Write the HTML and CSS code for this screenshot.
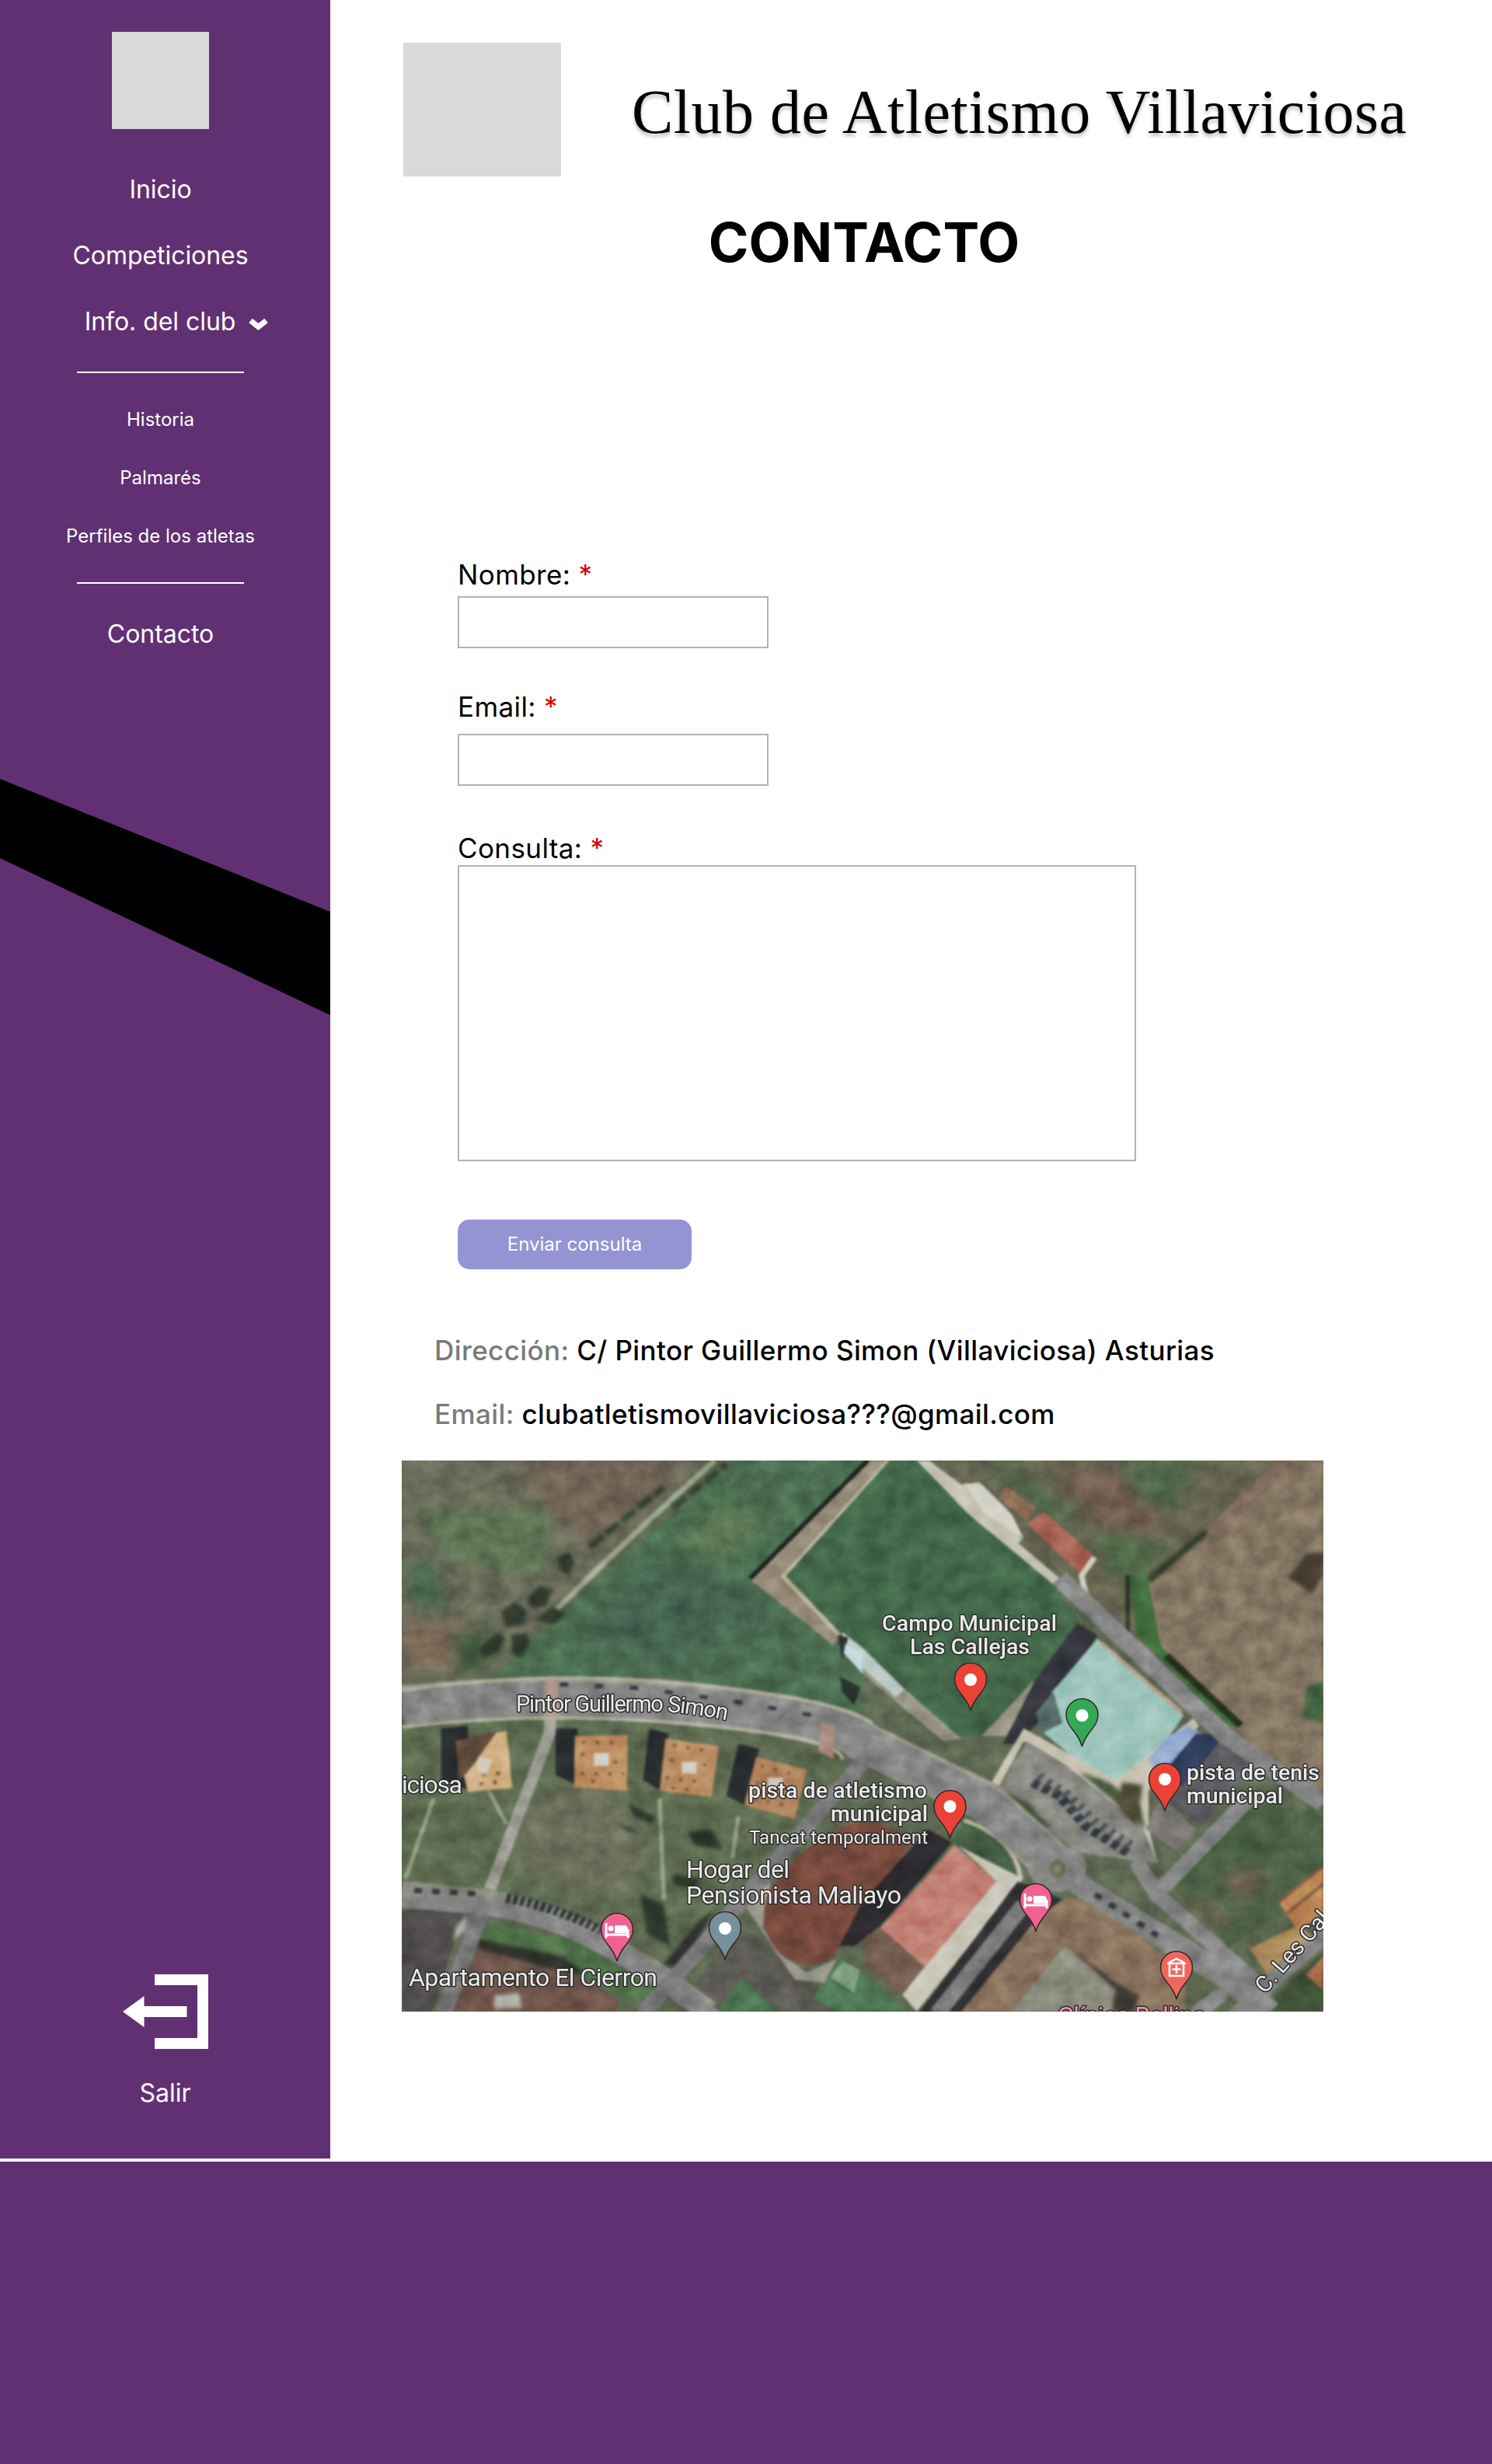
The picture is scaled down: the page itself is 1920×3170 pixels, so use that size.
FILE: index.html
```html
<!DOCTYPE html>
<html lang="es">
<head>
<meta charset="utf-8">
<title>Contacto - Club de Atletismo Villaviciosa</title>
<link rel="stylesheet" href="styles.css">
</head>
<body>
<div class="layout">
  <aside class="sidebar">
    <svg class="stripe" viewBox="0 0 425 304" aria-hidden="true"><path d="M0 0L425 171V304L0 102Z"/></svg>
    <div class="sidebar-logo"></div>
    <nav class="menu">
      <a class="item">Inicio</a>
      <a class="item">Competiciones</a>
      <a class="item item-open"><span>Info. del club</span><svg class="chevron" viewBox="0 0 25 15" aria-hidden="true"><path d="M2.500 2.500L12.500 10.500L22.500 2.500"/></svg></a>
      <div class="submenu">
        <a class="subitem">Historia</a>
        <a class="subitem">Palmarés</a>
        <a class="subitem">Perfiles de los atletas</a>
      </div>
      <a class="item">Contacto</a>
    </nav>
    <a class="exit">
      <svg class="exit-icon" viewBox="0 0 110 96" aria-hidden="true"><path d="M41 0H110V96H41V82H96V14H41ZM0 48L27.500 28V41H82.500V55H27.500V68Z"/></svg>
      <span>Salir</span>
    </a>
  </aside>
  <main class="content">
    <header class="header">
      <div class="club-logo"></div>
      <div class="club-name">Club de Atletismo Villaviciosa</div>
    </header>
    <h1 class="title">CONTACTO</h1>
    <form class="form">
      <label class="label">Nombre: <span class="req">*</span></label>
      <input class="input" type="text">
      <label class="label label-email">Email: <span class="req">*</span></label>
      <input class="input input-email" type="text">
      <label class="label label-query">Consulta: <span class="req">*</span></label>
      <textarea class="textarea"></textarea>
      <button class="send" type="button">Enviar consulta</button>
    </form>
    <div class="info">
      <p><span class="info-key">Dirección:</span> <span class="addr">C/ Pintor Guillermo Simon (Villaviciosa) Asturias</span></p>
      <p><span class="info-key">Email:</span> <span class="mail">clubatletismovillaviciosa???@gmail.com</span></p>
    </div>
    <div class="map">
      <svg class="terrain" viewBox="18 27 3100 2126" preserveAspectRatio="none" aria-hidden="true">
        <defs>
          <filter id="soft" x="0" y="0" width="100%" height="100%" color-interpolation-filters="sRGB"><feGaussianBlur stdDeviation="4"/></filter>
          <filter id="patch" x="-20%" y="-20%" width="140%" height="140%" color-interpolation-filters="sRGB"><feGaussianBlur stdDeviation="28"/></filter>
          <filter id="blob" x="-20%" y="-20%" width="140%" height="140%" color-interpolation-filters="sRGB"><feGaussianBlur stdDeviation="6"/></filter>
          <filter id="grain" x="0" y="0" width="100%" height="100%" color-interpolation-filters="sRGB"><feTurbulence type="fractalNoise" baseFrequency=".014" numOctaves="4" seed="8"/><feColorMatrix values="1.300 0 0 0 -.08  1.300 0 0 0 -.08  1.300 0 0 0 -.08  0 0 0 0 .2"/></filter>
        </defs>
        <rect x="18" y="27" width="3100" height="2126" fill="#5b6650"/>
        <g filter="url(#soft)">
          <path fill="#686958" d="M18 27H1060L540 600L300 860L18 910Z"/>
          <g filter="url(#patch)">
            <path fill="#6f6254" d="M420 27H980L660 350L480 200Z"/>
            <path fill="#5d7353" d="M60 220L520 200L500 480L180 420Z"/>
            <path fill="#41664c" d="M40 420L120 420L170 600L60 580Z"/>
            <path fill="#7a6655" d="M30 650H220V820H30Z"/>
            <path fill="#405a3e" d="M190 700L330 670L300 840H200Z"/>
          </g>
          <path fill="#4a6b4f" d="M1130 27L560 610L330 860H900L1300 930L1568 1040V780L1490 740L1180 485L1590 27Z"/>
          <g filter="url(#patch)">
            <path fill="#446250" d="M900 400L1180 500L1300 650L900 800L600 720Z"/>
            <path fill="#5a7450" d="M1050 200L1250 250L1100 420L960 380Z"/>
          </g>
          <path stroke="#95a287" stroke-width="20" fill="none" d="M1070 27L880 225L700 420L540 600"/>
          <g fill="#2e382c" filter="url(#blob)"><path d="M350 610L400 570L440 610L430 660L370 670ZM440 560L480 510L530 520L500 590L450 590ZM545 400L580 380L600 420L580 470L550 450ZM280 750L340 690L365 710L340 770L290 790ZM385 700L440 690L445 740L420 790L390 770ZM470 640L520 590L570 620L530 660Z"/></g>
          <path stroke="#2f3f2e" stroke-width="22" stroke-dasharray="60 14" fill="none" filter="url(#blob)" d="M650 360L900 130M930 210L1110 40"/>
          <path fill="#968b78" d="M1590 27H1660L1568 160L1310 470L1500 690L1470 740L1190 485Z"/>
          <path stroke="#c0b89c" stroke-width="12" fill="none" d="M1655 27L1300 475L1490 700"/>
          <path stroke="#18231c" stroke-width="16" fill="none" d="M1585 27L1190 482"/>
          <path fill="#416548" d="M1658 27H1750L2210 510L2300 650L2150 890L1980 1090H1880L1568 750L1490 690L1312 470Z"/>
          <path fill="#63624f" d="M1800 27H3118V1080H2800L2230 480L1900 120Z"/>
          <g filter="url(#patch)">
            <path fill="#4d6449" d="M2440 27H2700L2600 230L2490 180ZM1970 40L2100 60L2300 260L2240 300Z"/>
            <path fill="#705b4d" d="M2200 60H2400L2620 300L2400 290Z"/>
            <path fill="#4e6746" d="M2340 300L2600 350L2500 500L2400 460Z"/>
          </g>
          <path fill="#817360" d="M2528 500L2710 300L2990 27H3118V1340L2880 1120L2650 880L2560 740Z"/>
          <path fill="#7b685a" filter="url(#blob)" d="M2960 27H3040L2780 300L2730 290Z"/>
          <path fill="#2f3b29" filter="url(#blob)" d="M2520 480L2720 290L2730 310L2540 500Z"/>
          <path fill="#3d6a3b" d="M2465 470H2525L2570 740L2700 900L2840 1050L2790 1050L2490 700Z"/>
          <path stroke="#24301f" stroke-width="26" fill="none" d="M2590 780L2840 1050"/>
          <path stroke="#303728" stroke-width="16" fill="none" d="M2460 470V690"/>
          <g filter="url(#blob)"><path fill="#423a30" d="M3060 390L3118 380V470L3080 540L3000 480Z"/><path fill="#40603e" d="M3060 900L3118 880V1040L3050 1020Z"/></g>
          <path fill="#c2c1b2" d="M1750 27H1790L1900 120L1960 110L2060 240L2100 330L2240 450L2215 510L1930 240Z"/>
          <path fill="#d4d3c8" d="M1910 115L1970 120L2070 235L2110 330L1980 230Z"/>
          <path fill="#8b6a54" d="M2025 175L2050 125L2150 210L2120 260Z"/>
          <path fill="#5d6148" d="M2110 330L2270 480L2230 480L2090 345Z"/>
          <path fill="#a86456" d="M2120 270L2178 225L2343 390L2303 465Z"/>
          <path stroke="#d0cdbe" stroke-width="20" fill="none" d="M2348 400L2305 470L2320 560L2390 650"/>
          <path fill="#949080" d="M1968 1090L2140 880L2170 900L2060 1090ZM1568 750L1720 920L1900 1100L1840 1110L1568 850Z"/>
          <path fill="#bccbc5" d="M1500 690L1568 750L1710 910L1680 940L1568 830L1500 750Z"/>
          <path fill="#35353e" d="M2290 655L2358 700L2190 1000L2090 1120H2040L2150 870Z"/>
          <path fill="#9cc4bb" d="M2358 715L2648 1010L2540 1190L2400 1290L2180 1080L2205 920Z"/>
          <path fill="#546a68" d="M2150 1000L2210 920L2240 1040L2170 1080Z"/>
          <path stroke="#b7a18e" stroke-width="14" fill="none" d="M2370 730L2640 1000"/>
          <path fill="#c5c0ae" d="M2110 1060L2420 1260L2680 1020L2700 1050L2530 1300L2530 1440L2560 1580L2530 1560L2500 1460L2110 1110L2010 1320L1990 1290Z"/>
          <path fill="#85847e" d="M2120 1110L2250 1200L2510 1440L2560 1580L2480 1570L2300 1540L2010 1320Z"/>
          <path fill="#45563b" filter="url(#blob)" d="M2300 1230L2400 1270L2500 1360L2520 1450L2420 1350ZM2030 1300L2120 1340L2200 1440L2130 1450Z"/>
          <path fill="#4a4a36" filter="url(#blob)" d="M2440 1270L2510 1280L2490 1440L2430 1370Z"/>
          <g stroke-width="34" fill="none"><path stroke="#343b45" stroke-dasharray="24 16" d="M2140 1270L2230 1320L2320 1440L2460 1540"/><path stroke="#485058" stroke-dasharray="14 22" d="M2160 1245L2250 1310L2350 1420L2470 1510"/></g>
          <path fill="#90a8d0" d="M2600 1090L2660 1050L2710 1080L2580 1250L2525 1180Z"/>
          <path fill="#2f3c59" d="M2690 1080H2790L2650 1290L2580 1230Z"/>
          <path fill="#5c5c61" d="M2780 1110L2900 1180L2710 1440L2600 1340Z"/>
          <path fill="#787471" d="M2560 1350L2600 1350L2690 1450L2620 1530L2520 1450Z"/>
          <path fill="#4c5f45" d="M2890 1340L3118 1400V1680L2800 1900L2600 1660Z"/>
          <g filter="url(#patch)"><path fill="#705f50" d="M2790 1620L2920 1600L2880 1720L2800 1700Z"/><path fill="#35512f" d="M2760 1500L2900 1480L2900 1560Z"/><path fill="#746853" d="M2620 1700L2820 1780L2760 1840Z"/></g>
          <path fill="#b98252" d="M2968 1730L3118 1590V1780L3030 1840Z"/><path fill="#a98758" d="M2870 1910L3030 1820L3080 1860L2930 2010Z"/>
          <path stroke="#7c5b42" stroke-width="12" fill="none" d="M2968 1730L3118 1590M2990 1780L3118 1660"/>
          <path fill="#3f5137" d="M2900 2153L3118 1920V2153Z"/><path fill="#a56648" d="M3060 2010L3118 1940V2070Z"/>
          <path fill="#5b694f" d="M18 1030L520 1020L1100 1060L1500 1190L1560 1220L1000 1950L620 1720L18 1650Z"/>
          <path fill="#696d59" d="M400 1350L700 1250L860 1500L760 1740L420 1620Z" filter="url(#patch)"/>
          <path stroke="#8f9a7f" stroke-width="14" fill="none" d="M885 1330L900 1720M1150 1400L1130 1560M310 1300L370 1430M125 1330L30 1640"/>
          <path fill="#282b2d" d="M150 1060L240 1050L250 1300L150 1260ZM535 1060H610V1280L535 1240ZM850 1060L915 1080L890 1300L830 1260ZM1150 1120L1220 1140L1180 1360L1110 1320Z"/>
          <g>
            <path fill="#d0ae80" d="M200 1110L370 1070L390 1290L240 1305Z"/>
            <path fill="#bb8b60" d="M600 1090L778 1085L775 1300L598 1288Z"/>
            <path fill="#b98a60" d="M905 1100L1085 1130L1060 1325L885 1300Z"/>
            <path fill="#b0815a" d="M1210 1170L1380 1220L1340 1410L1170 1355Z"/>
          </g>
          <path fill="#604a3a" d="M200 1110L340 1070L240 1230L210 1260Z"/>
          <path stroke="#7c573c" stroke-width="12" stroke-dasharray="12 34" fill="none" d="M625 1115H760M620 1160H655M730 1190H770M620 1235H765M655 1265H700M930 1125L1060 1150M920 1180L950 1190M1030 1200L1060 1205M905 1250L1040 1270M925 1290L1000 1300M1225 1205L1350 1240M1210 1270L1330 1300M1200 1330L1320 1360M290 1240L370 1230M280 1275L360 1265"/>
          <g fill="#d0cec1"><path d="M275 1170L325 1180L300 1240L270 1220ZM665 1155H715V1205H665ZM960 1190H1010V1235H960ZM1250 1250H1300V1290H1250Z"/></g>
          <path fill="#2b372b" filter="url(#blob)" d="M780 1350L870 1400L860 1430L800 1400ZM725 1410L810 1460L780 1460ZM980 1460L1060 1450L1100 1530L1000 1510ZM820 1700L900 1740L920 1900L840 1850ZM930 1620L1020 1640L1000 1680L930 1660Z"/>
          <path fill="#4f4c4b" d="M18 1760H230L120 2153H18Z"/>
          <path fill="#6b5249" d="M280 1900L560 1970L750 2110L740 2153H190Z"/>
          <path fill="#4f7048" d="M310 1810L600 1880L870 2060L820 2120L560 1990L290 1880Z"/>
          <path fill="#2c3029" filter="url(#blob)" d="M270 1870L560 1940L640 2010L560 2000L280 1910Z"/>
          <path fill="#5a5852" d="M1140 1830L1200 1850L1480 2153H940Z"/>
          <path fill="#31302e" filter="url(#blob)" d="M1020 1800L1070 1760L960 1990L900 1970Z"/>
          <path fill="#4b7350" d="M1080 2153L1160 2020L1280 2153ZM1400 2100L1500 1950L1720 2153H1480Z"/>
          <path fill="#7f9f80" d="M1500 1960L1560 1990L1540 2080L1460 2020Z"/>
          <path fill="#98948a" d="M1170 1740L1260 1650L1230 1830L1300 1940L1380 2000L1480 1950L1440 2040L1340 2030Z"/>
          <path fill="#74483c" d="M1500 1440Q1620 1380 1740 1500L1568 1760L1470 1940Q1390 2010 1290 1930Q1210 1830 1250 1690Q1340 1530 1500 1440Z"/>
          <path fill="#2b282e" d="M1788 1450L1870 1500L1630 1820L1540 1900L1490 1900L1568 1730Z"/>
          <path fill="#c9c6b8" d="M1880 1500L2108 1640L1750 2153L1690 2070L2018 1650Z"/>
          <path fill="#bf7c70" d="M1878 1510L2018 1650L1778 1980L1628 1830Z"/>
          <path fill="#725c4f" d="M1628 1830L1778 1980L1700 2090L1568 1960L1580 1860Z"/>
          <path fill="#435c43" d="M1868 1500L1910 1420L2040 1500L2090 1630Z"/>
          <path stroke="#bdbba8" stroke-width="14" fill="none" d="M1910 1415Q2080 1480 2100 1640"/>
          <path fill="#866f5b" d="M2150 1780L2270 1710L2400 1780L2660 2000L2650 2153H1850Z"/>
          <path fill="#87897b" d="M2248 1900L2418 2060L2400 2153H2068Z"/>
          <path fill="#3b3a34" filter="url(#blob)" d="M2260 1900L2430 2050L2500 2090L2480 2153H2410L2420 2070Z"/>
          <path fill="#302f32" d="M2090 1650L2240 1720L2150 1800L1900 2153H1760Z"/>
          <g fill="none" stroke="#97978a" stroke-linejoin="round">
            <path stroke-width="150" d="M18 970Q500 910 1000 965T1568 1110L1980 1340L2220 1590"/>
            <path stroke-width="84" d="M18 1690L320 1725Q520 1770 700 1890L880 2010L1050 2153" stroke="#818477"/>
            <path stroke-width="84" d="M2290 1660L2760 2000L2940 2153" stroke="#7d7f6e"/>
          </g>
          <g fill="none" stroke="#828282" stroke-linejoin="round">
            <path stroke-width="130" d="M18 975Q500 920 1000 970T1568 1115L1980 1350L2220 1590"/>
            <path stroke-width="65" d="M18 1718L320 1750Q520 1790 700 1900L890 2030L1070 2180M2230 480L2790 1090L3118 1350"/>
            <path stroke-width="40" stroke="#98988f" d="M520 870L515 1080L315 1680"/>
            <path stroke-width="56" stroke="#757575" d="M300 1720L160 2153M830 2160L1568 1190M1820 2160L2110 1740"/>
            <path stroke-width="76" d="M2250 1630L2750 1980L2940 2153"/>
            <path stroke-width="56" stroke-linecap="round" d="M2498 1590L2558 1700L2920 2070M2860 1340L2555 1700M2810 2180L3118 1860M2700 2153L2770 2090"/>
          </g>
          <ellipse cx="2223" cy="1600" rx="98" ry="90" fill="#848482"/><ellipse cx="2223" cy="1600" rx="28" ry="34" fill="#6d6f55"/><ellipse cx="2223" cy="1600" rx="13" ry="16" fill="#858476"/>
          <path stroke="#aeae9b" stroke-width="12" fill="none" d="M18 915Q500 830 1000 890T1600 1040M18 1055Q500 990 1000 1045T1500 1180"/>
          <path stroke="#2f3338" stroke-width="36" stroke-dasharray="14 10" fill="none" d="M370 1715Q540 1750 690 1840"/>
          <path stroke="#35383c" stroke-width="20" stroke-dasharray="26 34" fill="none" d="M60 1685L300 1700M2350 1700L2560 1860"/>
          <path fill="#a98b80" d="M500 870H545V1020H505ZM1430 1040L1475 1050L1470 1180L1420 1150Z"/>
          <path stroke="#33383a" stroke-width="16" stroke-dasharray="28 90" fill="none" d="M550 890L820 905L1130 955L1400 1010"/>
          <path fill="#25302c" d="M1485 700L1520 710L1500 800ZM1490 860L1560 900L1540 970L1500 920Z"/>
          <path fill="#c8dbe0" d="M1510 735L1568 770V850L1505 770Z"/>
          <path fill="#b4b4ad" filter="url(#blob)" d="M330 2090L410 2080L420 2140H330ZM200 1830L240 1780L230 1840L190 1880Z"/>
        </g>
        <rect class="grain" x="18" y="27" width="3100" height="2126" filter="url(#grain)"/>
      </svg>
      <svg class="places" viewBox="517 1879 1186 709">
        <defs>
          <path id="street" d="M664 2202H850Q900 2204 960 2219"/>
          <path id="pin" d="M0-21.500A20.500 20.500 0 0 1 20.500-1C20.500 16 5 20 0 40C-5 20-20.500 16-20.500-1A20.500 20.500 0 0 1 0-21.500Z"/>
          <g id="bed" fill="none" stroke="#fff" stroke-width="3"><path d="M-14-8V11M-14 7H14M14 11V0"/><path fill="#fff" stroke="none" d="M-3-5H9Q14-5 14 0V5H-3Z"/><circle cx="-8" cy="-1" r="3.500" fill="#fff" stroke="none"/></g>
        </defs>
        <g class="place-labels">
          <text font-size="29"><textPath href="#street" textLength="272">Pintor Guillermo Simon</textPath></text>
          <g font-weight="500" font-size="28.500">
            <text x="1135" y="2098" textLength="225">Campo Municipal</text>
            <text x="1171" y="2128" textLength="154">Las Callejas</text>
            <text x="1527" y="2290" textLength="171">pista de tenis</text>
            <text x="1527" y="2320" textLength="124">municipal</text>
            <text x="963" y="2313" textLength="230">pista de atletismo</text>
            <text x="1069" y="2343" textLength="125">municipal</text>
          </g>
          <text x="964" y="2372" font-size="24" textLength="230">Tancat temporalment</text>
          <g font-size="32">
            <text x="883" y="2416" textLength="133">Hogar del</text>
            <text x="883" y="2449" textLength="277">Pensionista Maliayo</text>
            <text x="517" y="2307" textLength="78">iciosa</text>
            <text x="526" y="2555" textLength="320">Apartamento El Cierron</text>
            <text x="1361" y="2604" textLength="191" class="clinic">Clínica Bellina</text>
          </g>
          <text transform="translate(1628 2566) rotate(-49)" font-size="29">C. Les Cal</text>
        </g>
        <g stroke="#34262b" stroke-width="1.500">
          <g fill="#ea4335"><use href="#pin" x="1249" y="2161"/><use href="#pin" x="1499" y="2290"/><use href="#pin" x="1222.500" y="2325"/></g>
          <use href="#pin" x="1392.500" y="2207" fill="#34a853"/>
          <use href="#pin" x="933" y="2481" fill="#78909c"/>
          <g fill="#f06292"><use href="#pin" x="794" y="2483"/><use href="#pin" x="1333" y="2445"/></g>
          <use href="#pin" x="1514" y="2532" fill="#ee675c"/>
        </g>
        <g fill="#fff"><circle cx="1249" cy="2161" r="8"/><circle cx="1499" cy="2289" r="8"/><circle cx="1222.500" cy="2324" r="8"/><circle cx="1392.500" cy="2207" r="8"/><circle cx="933" cy="2481" r="8"/></g>
        <use href="#bed" x="794" y="2482"/><use href="#bed" x="1333" y="2444"/>
        <path fill="none" stroke="#fff" stroke-width="2.500" d="M1505 2525V2542H1523V2525M1502 2526H1526M1504 2525L1514 2520L1524 2525M1514 2528V2539M1508.500 2533.500H1519.500"/>
      </svg>
    </div>
  </main>
</div>
<footer class="footer"></footer>
</body>
</html>
```
FILE: styles.css
```css
* { box-sizing: border-box; }
body { margin: 0; background: #fff; color: #000; font-family: Inter, "Liberation Sans", sans-serif; }
.layout { display: flex; height: 2777px; }
.sidebar { position: relative; width: 425px; height: 2777px; padding: 41px 12px 64px 0; background: #613072; color: #fff; display: flex; flex-direction: column; align-items: center; }
.stripe { position: absolute; left: 0; top: 1002px; width: 425px; height: 304px; }
.sidebar-logo { width: 125px; height: 125px; background: #d9d9d9; }
.menu { display: flex; flex-direction: column; align-items: center; width: 100%; padding-top: 58px; }
.item { height: 85px; line-height: 40px; font-size: 32px; letter-spacing: -.05px; white-space: nowrap; }
.item-open { display: flex; gap: 17px; height: 84px; padding-left: 41px; }
.chevron { width: 25px; height: 15px; margin-top: 16px; }
.chevron path { fill: none; stroke: #fff; stroke-width: 7; }
.submenu { width: 215px; height: 273px; margin-bottom: 45px; padding-top: 44px; border-top: 2px solid #fff; border-bottom: 2px solid #fff; display: flex; flex-direction: column; align-items: center; }
.subitem { height: 75px; line-height: 32px; font-size: 24px; white-space: nowrap; }
.exit { display: flex; flex-direction: column; align-items: center; gap: 37px; margin-top: auto; padding-left: 13px; font-size: 32px; line-height: 40px; }
.exit span { padding-right: 1px; }
.exit-icon { width: 110px; height: 96px; fill: #fff; }
.content { flex: 1; padding: 55px 0 0 92px; }
.header { display: flex; height: 172px; padding-left: 2px; }
.club-logo { width: 203px; height: 172px; background: #d9d9d9; }
.club-name { margin: 43px 0 0 91px; font: 80px/92px "Liberation Serif", serif; letter-spacing: .5px; white-space: nowrap; text-shadow: 0 4px 4px rgba(0, 0, 0, .25); }
.title { width: 1190px; margin: 43px 0 0; font-size: 70px; line-height: 84px; font-weight: 700; letter-spacing: .2px; text-align: center; }
.form { display: flex; flex-direction: column; align-items: flex-start; margin: 364px 0 0 72px; }
.label { height: 49px; font-size: 35px; line-height: 42px; letter-spacing: .4px; white-space: nowrap; }
.req { color: #d40000; }
.input, .textarea { display: block; margin: 0; padding: 8px; width: 400px; height: 67px; border: 2px solid #b3b3b3; border-radius: 0; background: #fff; resize: none; outline: 0; }
.label-email { margin-top: 54px; height: 56px; }
.label-query { margin-top: 59px; height: 43px; }
.textarea { width: 873px; height: 381px; }
.send { margin-top: 75px; width: 301px; height: 64px; padding: 0 0 2px; border: 0; border-radius: 15px; background: #9494d3; color: #fff; font: 400 24px Inter, sans-serif; }
.info { margin: 83px 0 0 42px; font-size: 35px; line-height: 42px; font-weight: 500; letter-spacing: .4px; white-space: nowrap; }
.info p { margin: 0 0 40px; }
.info p:last-child { margin-bottom: 39px; }
.info-key { color: #7a7a7a; }
.map { position: relative; width: 1186px; height: 709px; overflow: hidden; }
.terrain, .places { position: absolute; inset: 0; width: 1186px; height: 709px; }
.grain { mix-blend-mode: overlay; }
.place-labels { font-family: Roboto, sans-serif; fill: #e9e9e9; stroke: #2b2b2b; stroke-width: 3px; paint-order: stroke; stroke-linejoin: round; }
.clinic { fill: #f48fb1; }
.footer { margin-top: 4px; height: 389px; background: #613072; }
```
